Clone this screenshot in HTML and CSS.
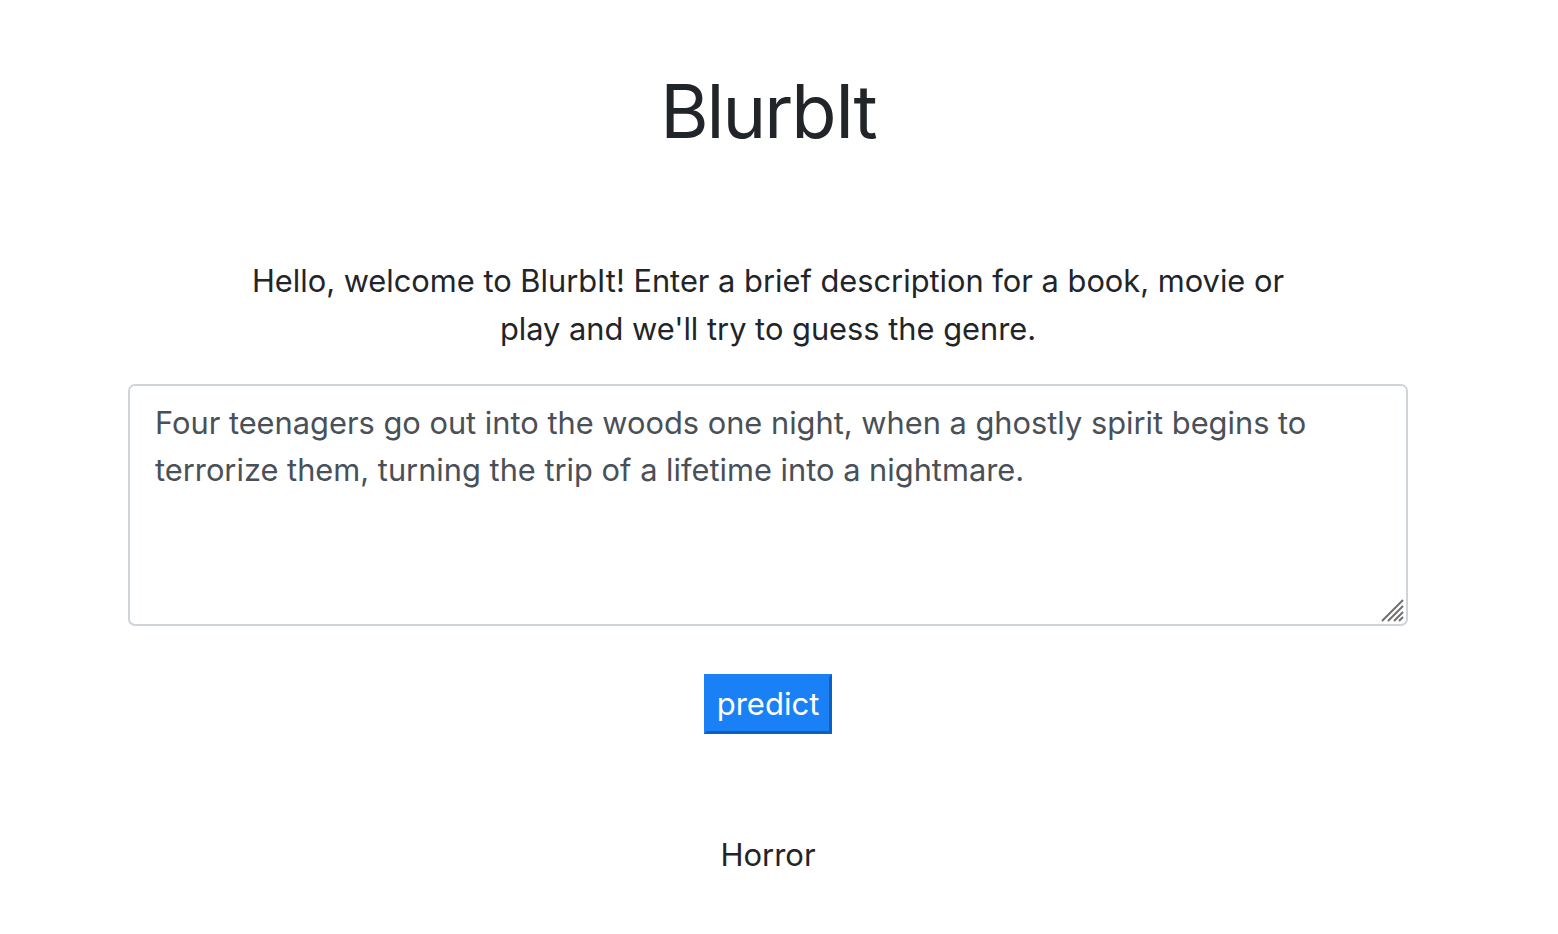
FILE: index.html
```html
<!DOCTYPE html>
<html lang="en">
<head>
<meta charset="utf-8">
<title>BlurbIt</title>
<link rel="stylesheet" href="styles.css">
</head>
<body>
<main class="page">
  <h1 class="title">BlurbIt</h1>
  <p class="intro">Hello, welcome to BlurbIt! Enter a brief description for a book, movie or play and we'll try to guess the genre.</p>
  <form class="form">
    <div class="field">
      <textarea class="blurb">Four teenagers go out into the woods one night, when a ghostly spirit begins to terrorize them, turning the trip of a lifetime into a nightmare.</textarea>
      <svg class="grip" width="28" height="28" viewBox="0 0 28 28" aria-hidden="true">
        <line x1="4" y1="25" x2="25" y2="4" />
        <line x1="10" y1="25" x2="25" y2="10" />
        <line x1="16" y1="25" x2="25" y2="16" />
        <line x1="21" y1="25" x2="25" y2="21" />
      </svg>
    </div>
    <button type="button" class="predict">predict</button>
  </form>
  <p class="result">Horror</p>
</main>
</body>
</html>
```
FILE: styles.css
```css
html, body {
  margin: 0;
  padding: 0;
  background: #fff;
}
body {
  font-family: Inter, "Noto Sans", "Liberation Sans", sans-serif;
  color: #212529;
}
.page {
  display: flex;
  flex-direction: column;
  align-items: center;
  padding: 0 172px 0 150px;
}
.title {
  margin: 67px 0 0;
  font-size: 74px;
  font-weight: 400;
  line-height: 1.2;
  letter-spacing: -2px;
}
.intro {
  margin: 101px 0 0;
  max-width: 1060px;
  text-align: center;
  font-size: 30.8px;
  line-height: 48px;
}
.form {
  display: flex;
  flex-direction: column;
  align-items: center;
  width: 1280px;
  margin-top: 31px;
}
.field {
  position: relative;
  width: 1280px;
  height: 242px;
}
.blurb {
  box-sizing: border-box;
  display: block;
  width: 100%;
  height: 100%;
  margin: 0;
  padding: 13px 25px;
  border: 2px solid #ced4da;
  border-radius: 7px;
  font-family: Inter, "Noto Sans", "Liberation Sans", sans-serif;
  font-size: 30.8px;
  line-height: 47px;
  color: #495057;
  background: #fff;
  resize: none;
  outline: none;
}
.grip {
  position: absolute;
  right: 2px;
  bottom: 2px;
  stroke: #6f6f6f;
  stroke-width: 2;
}
.predict {
  margin-top: 48px;
  height: 60px;
  padding: 0 10px;
  background: #1a80f5;
  color: #fff;
  border: 3px solid #1a80f5;
  border-right-color: #0f5fbd;
  border-bottom-color: #0f5fbd;
  font-family: Inter, "Noto Sans", "Liberation Sans", sans-serif;
  font-size: 31px;
  line-height: 1;
}
.result {
  margin: 97px 0 0;
  font-size: 31px;
  line-height: 48px;
}
```
